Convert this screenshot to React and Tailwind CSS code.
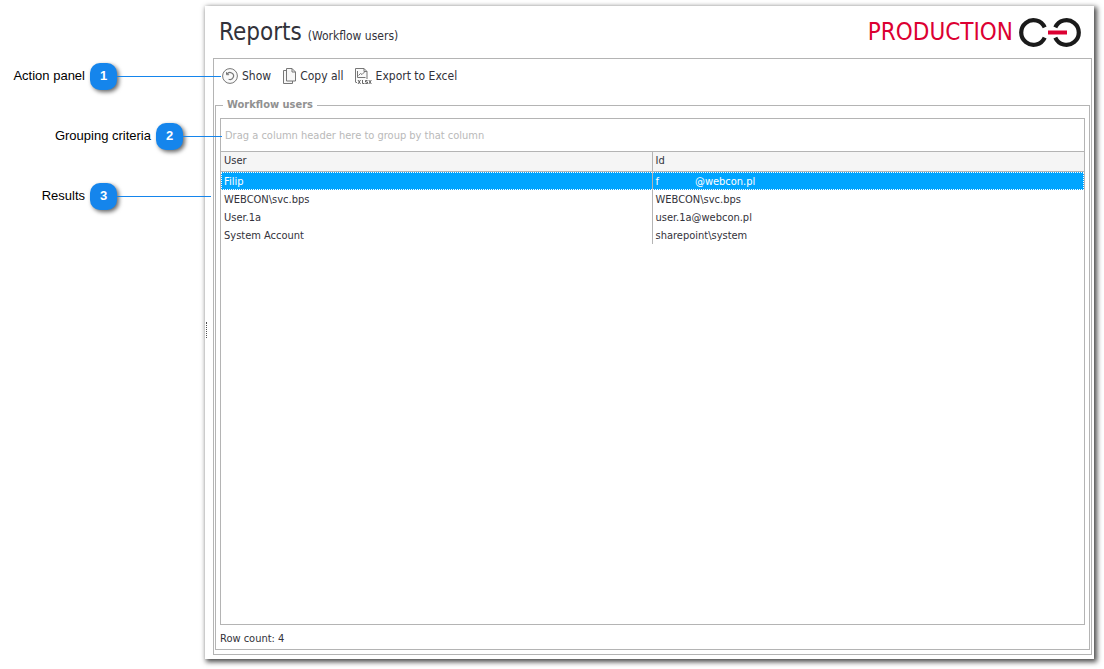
const callouts = [
  { number: 1, label: 'Action panel', labelClass: 'w-[85px]', lineClass: 'w-[104px]' },
  { number: 2, label: 'Grouping criteria', labelClass: 'w-[151px]', lineClass: 'w-[39px]' },
  { number: 3, label: 'Results', labelClass: 'w-[85px]', lineClass: 'w-[94px]' },
];

const users = [
  { name: 'Filip', id: ['f', '@webcon.pl'], selected: true },
  { name: 'WEBCON\\svc.bps', id: ['WEBCON\\svc.bps'] },
  { name: 'User.1a', id: ['user.1a@webcon.pl'] },
  { name: 'System Account', id: ['sharepoint\\system'] },
];

function ShowIcon() {
  return (
    <svg width="16" height="16" viewBox="0 0 16 16" fill="none" stroke="#777">
      <circle cx="8" cy="8" r="7.4" fill="#fafafa" />
      <path d="M5 6.2A3.5 3.5 0 1 1 6.6 11.2" strokeWidth="1.2" />
      <path d="M4.500 4.2v2.500h2.600" />
    </svg>
  );
}

function CopyIcon() {
  return (
    <svg width="14" height="16" viewBox="-1 0 14 16" fill="#f7f7f7" stroke="#777">
      <path d="M3 2.5H.5v13h9V13" />
      <path d="M3.5.5h5.500l3.500 3.500v9h-9z" />
      <path d="M9 .5V4h3.500" fill="none" />
    </svg>
  );
}

function ExcelIcon() {
  return (
    <svg width="17" height="17" viewBox="0 0 17 17" fill="none" stroke="#777">
      <path d="M.5 14V.5h8.500l3 3V11" fill="#fafafa" />
      <path d="M.5 14.500H2M9 .5v3h3" />
      <path d="M2.500 3v6.500h8M3.500 7.500l2-2 1.500 1 3-3" />
      <path
        d="M3 12l2.500 4M5.500 12L3 16M7.500 12v3.500h2M12.500 12.500h-2v1.500h2v1.500h-2.200M13.800 12l2.500 4M16.300 12l-2.500 4"
        stroke="#555"
        strokeWidth=".9"
      />
    </svg>
  );
}

function Logo() {
  return (
    <svg width="62" height="29" viewBox="0 0 62 29" fill="none" stroke="#1a1a1a" strokeWidth="4.2">
      <path d="M25.700 9.400A12.300 12.300 0 1 0 25.700 19.600" />
      <path d="M36.300 9.400A12.300 12.300 0 1 1 36.300 19.600" />
      <path d="M29 14.500h19" stroke="#dc0032" strokeWidth="4" />
    </svg>
  );
}

const actions = [
  { label: 'Show', icon: ShowIcon },
  { label: 'Copy all', icon: CopyIcon },
  { label: 'Export to Excel', icon: ExcelIcon },
];

function Callouts() {
  return (
    <aside className="w-[205px] shrink-0 relative z-10 pt-[62px] flex flex-col gap-8 font-['Liberation_Sans',Arial,sans-serif] text-[13px] text-black">
      {callouts.map((item) => (
        <div key={item.number} className="flex items-center h-7 whitespace-nowrap">
          <span className={`${item.labelClass} shrink-0 text-right`}>{item.label}</span>
          <span className="ml-[5px] w-[27px] h-[27px] shrink-0 rounded-[10px] bg-[#1585ec] text-white font-bold flex items-center justify-center shadow-[2px_2px_4px_rgba(0,0,0,0.6)]">
            {item.number}
          </span>
          <span className={`${item.lineClass} h-px shrink-0 bg-[#1585ec]`} />
        </div>
      ))}
    </aside>
  );
}

function UsersTable() {
  return (
    <table className="w-full table-fixed border-separate border-spacing-0 text-left">
      <thead>
        <tr className="bg-[#f5f5f5]">
          <th className="w-1/2 h-5 px-[3px] py-0 font-normal border-r border-b border-[#b4b4b4]">User</th>
          <th className="w-1/2 h-5 px-[3px] py-0 font-normal border-b border-[#b4b4b4]">Id</th>
        </tr>
      </thead>
      <tbody>
        {users.map((user) => (
          <tr
            key={user.name}
            className={`leading-4 ${
              user.selected ? 'bg-[#00a5ff] text-white outline outline-dotted outline-white -outline-offset-1' : ''
            }`}
          >
            <td className="h-[18px] px-[3px] pt-[2px] pb-0 border-r border-[#b4b4b4]">{user.name}</td>
            <td className="h-[18px] px-[3px] pt-[2px] pb-0">
              <span className="flex gap-9">
                {user.id.map((part) => (
                  <span key={part}>{part}</span>
                ))}
              </span>
            </td>
          </tr>
        ))}
      </tbody>
    </table>
  );
}

export default function App() {
  return (
    <div className="min-h-screen bg-white flex pt-[6px] pr-[10px] pb-[10px] font-['DejaVu_Sans_Condensed','DejaVu_Sans',sans-serif] text-[11px] text-[#32323a]">
      <div className="-mt-[6px] flex shrink-0">
        <Callouts />
      </div>

      <main className="flex-1 min-w-0 flex flex-col bg-white pb-1 shadow-[2px_2px_5px_1px_rgba(0,0,0,0.7)]">
        <header className="h-[52px] shrink-0 flex items-center justify-between pl-[14px] pr-[13px]">
          <h1 className="flex items-baseline gap-[6px] pt-1 text-[24px] leading-8">
            Reports <span className="text-[12px]">(Workflow users)</span>
          </h1>
          <div className="flex items-center gap-[6px] text-[24px] leading-8 text-[#dc0032]">
            PRODUCTION
            <Logo />
          </div>
        </header>

        <div className="relative flex-1 ml-2 mr-[2px] flex flex-col border border-[#b4b4b4]">
          {/* Splitter grip */}
          <span className="absolute -left-2 top-[263px] h-4 border-l border-dotted border-[#505050]" />

          <div className="h-9 shrink-0 flex items-center gap-[11px] pl-2 pb-[2px]">
            {actions.map((action) => (
              <button key={action.label} type="button" className="flex items-center gap-1 text-[12px]">
                <action.icon />
                {action.label}
              </button>
            ))}
          </div>

          <fieldset className="flex-1 min-w-0 mx-px mb-1 px-1 pt-[3px] flex flex-col border border-[#b4b4b4]">
            <legend className="ml-[3px] px-1 h-5 leading-5 font-bold text-[#919191]">Workflow users</legend>
            <div className="flex-1 border border-[#b4b4b4]">
              <div className="h-[33px] flex items-center pl-1 pt-[3px] text-[#b9b9b9] border-b border-[#b4b4b4]">
                Drag a column header here to group by that column
              </div>
              <UsersTable />
            </div>
            <p className="h-6 leading-7">Row count: {users.length}</p>
          </fieldset>
        </div>
      </main>
    </div>
  );
}
